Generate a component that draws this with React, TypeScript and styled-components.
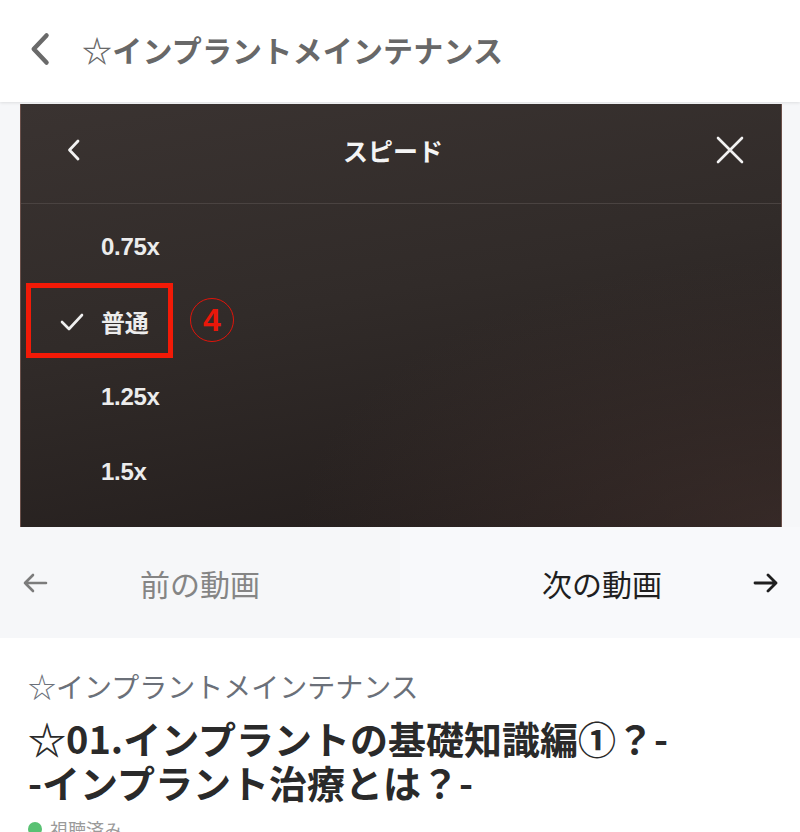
import React, { useState } from 'react';
import styled, { createGlobalStyle } from 'styled-components';

const GlobalStyle = createGlobalStyle`
  html, body {
    margin: 0;
    padding: 0;
    background: #ffffff;
  }
  body {
    font-family: "Noto Sans CJK JP", "Noto Sans", "Liberation Sans", sans-serif;
    overflow: hidden;
  }
`;

const Page = styled.div`
  width: 800px;
  height: 832px;
  display: flex;
  flex-direction: column;
  overflow: hidden;
  & > * {
    flex-shrink: 0;
  }
`;

const Header = styled.header`
  height: 102px;
  display: flex;
  align-items: center;
  gap: 22px;
  padding: 0 0 4px 24px;
  box-sizing: border-box;
  background: #ffffff;
  box-shadow: 0 1px 3px rgba(0, 0, 0, 0.1);
  position: relative;
  z-index: 1;
`;

const HeaderTitle = styled.h1`
  margin: 0;
  font-size: 30px;
  font-weight: 700;
  color: #686868;
  letter-spacing: 0.2px;
`;

const Stage = styled.div`
  background: #f6f7f9;
  padding: 2px 18px 0 20px;
`;

const Player = styled.div`
  height: 423px;
  display: flex;
  flex-direction: column;
  border-left: 1px solid #6b504a;
  border-right: 1px solid #6b504a;
  background:
    radial-gradient(ellipse at 100% 100%, rgba(70, 52, 48, 0.55) 0%, rgba(0, 0, 0, 0) 45%),
    linear-gradient(170deg, #3a3331 0%, #312b29 45%, #221c1b 100%);
  position: relative;
`;

const PanelHead = styled.div`
  height: 100px;
  box-sizing: border-box;
  padding-bottom: 8px;
  display: grid;
  grid-template-columns: 100px 1fr 100px;
  align-items: center;
  border-bottom: 1px solid #4a4341;
`;

const PanelTitle = styled.div`
  text-align: center;
  font-size: 25px;
  font-weight: 700;
  color: #f4f4f4;
  padding-right: 16px;
`;

const IconCell = styled.div<{ $align: 'start' | 'end' }>`
  display: flex;
  justify-content: ${(p) => (p.$align === 'start' ? 'flex-start' : 'flex-end')};
  padding: ${(p) => (p.$align === 'start' ? '0 0 0 42px' : '0 36px 0 0')};
`;

const SpeedList = styled.ul`
  list-style: none;
  margin: 0;
  padding: 5px 0 0;
`;

const SpeedRow = styled.li`
  height: 75px;
  display: flex;
  align-items: center;
  position: relative;
`;

const CheckSlot = styled.span`
  width: 80px;
  display: flex;
  justify-content: flex-end;
  padding-right: 17px;
  box-sizing: border-box;
`;

const SpeedLabel = styled.span`
  font-family: "Liberation Sans", "Noto Sans CJK JP", sans-serif;
  font-size: 24px;
  font-weight: 700;
  color: #ececec;
  letter-spacing: -0.3px;
`;

const HighlightBox = styled.span`
  position: absolute;
  left: 5px;
  top: -1px;
  width: 147px;
  height: 75px;
  box-sizing: border-box;
  border: 5px solid #f21a07;
`;

const StepBadge = styled.span`
  position: absolute;
  left: 169px;
  top: 14px;
  width: 44px;
  height: 44px;
  box-sizing: border-box;
  border: 1px solid #e0140a;
  border-radius: 50%;
  display: flex;
  align-items: center;
  justify-content: center;
  font-family: "Liberation Sans", sans-serif;
  font-size: 32px;
  font-weight: 700;
  color: #e8170a;
  line-height: 1;
`;

const VideoNav = styled.nav`
  height: 111px;
  display: grid;
  grid-template-columns: 1fr 1fr;
  background: #f6f7f9;
`;

const NavButton = styled.button<{ $active: boolean; $side: 'prev' | 'next' }>`
  border: none;
  margin: 0;
  background: ${(p) => (p.$side === 'next' ? '#f8f9fb' : '#f6f7f9')};
  display: flex;
  align-items: center;
  justify-content: ${(p) => (p.$side === 'prev' ? 'flex-start' : 'space-between')};
  padding: ${(p) => (p.$side === 'prev' ? '0 0 0 22px' : '0 21px 0 142px')};
  gap: ${(p) => (p.$side === 'prev' ? '92px' : '0')};
  white-space: nowrap;
  font-family: "Noto Sans CJK JP", sans-serif;
  font-size: 30px;
  font-weight: 400;
  color: ${(p) => (p.$active ? '#1f1f1f' : '#858585')};
  cursor: pointer;
`;

const Info = styled.section`
  padding: 28px 28px 0;
  background: #ffffff;
`;

const Category = styled.div`
  font-size: 28px;
  color: #6b7079;
  line-height: 40px;
`;

const Title = styled.h2`
  margin: 10px 0 0;
  font-size: 38px;
  font-weight: 700;
  color: #2a2a2a;
  line-height: 44px;
  letter-spacing: 0px;
`;

const Meta = styled.div`
  margin-top: 12px;
  display: flex;
  align-items: center;
  gap: 8px;
  font-size: 18px;
  color: #9a9a9a;
`;

const Dot = styled.span`
  width: 14px;
  height: 14px;
  border-radius: 50%;
  background: #59c173;
`;

const ChevronLeft = ({ size, color, width }: { size: number; color: string; width: number }) => (
  <svg width={size} height={size} viewBox="0 0 24 24" fill="none">
    <path d="M15 3 L6.5 12 L15 21" stroke={color} strokeWidth={width} strokeLinecap="round" strokeLinejoin="round" />
  </svg>
);

const CloseIcon = () => (
  <svg width="30" height="30" viewBox="0 0 30 30" fill="none">
    <path d="M3 3 L27 27 M27 3 L3 27" stroke="#f2f2f2" strokeWidth="2.6" strokeLinecap="round" />
  </svg>
);

const CheckIcon = () => (
  <svg width="24" height="18" viewBox="0 0 24 18" fill="none">
    <path d="M2 9 L9 16 L22 2" stroke="#efefef" strokeWidth="2.6" strokeLinecap="round" strokeLinejoin="round" />
  </svg>
);

const Arrow = ({ dir, color }: { dir: 'left' | 'right'; color: string }) => (
  <svg width="26" height="24" viewBox="0 0 26 24" fill="none">
    {dir === 'left' ? (
      <path d="M24 12 H3 M11 4 L3 12 L11 20" stroke={color} strokeWidth="2.6" strokeLinecap="round" strokeLinejoin="round" />
    ) : (
      <path d="M2 12 H23 M15 4 L23 12 L15 20" stroke={color} strokeWidth="2.8" strokeLinecap="round" strokeLinejoin="round" />
    )}
  </svg>
);

const speeds = ['0.75x', '普通', '1.25x', '1.5x'];

const App = () => {
  const [speed, setSpeed] = useState('普通');

  return (
    <Page>
      <GlobalStyle />
      <Header>
        <ChevronLeft size={36} color="#6a6a6a" width={3} />
        <HeaderTitle>☆インプラントメインテナンス</HeaderTitle>
      </Header>

      <Stage>
        <Player>
          <PanelHead>
            <IconCell $align="start">
              <ChevronLeft size={24} color="#f2f2f2" width={2.8} />
            </IconCell>
            <PanelTitle>スピード</PanelTitle>
            <IconCell $align="end">
              <CloseIcon />
            </IconCell>
          </PanelHead>
          <SpeedList>
            {speeds.map((s) => (
              <SpeedRow key={s} onClick={() => setSpeed(s)}>
                <CheckSlot>{speed === s && <CheckIcon />}</CheckSlot>
                <SpeedLabel>{s}</SpeedLabel>
                {s === '普通' && (
                  <>
                    <HighlightBox />
                    <StepBadge>4</StepBadge>
                  </>
                )}
              </SpeedRow>
            ))}
          </SpeedList>
        </Player>
      </Stage>

      <VideoNav>
        <NavButton $side="prev" $active={false}>
          <Arrow dir="left" color="#7c7c7c" />
          前の動画
        </NavButton>
        <NavButton $side="next" $active>
          次の動画
          <Arrow dir="right" color="#1f1f1f" />
        </NavButton>
      </VideoNav>

      <Info>
        <Category>☆インプラントメインテナンス</Category>
        <Title>
          ☆01.インプラントの基礎知識編①？-
          <br />
          -インプラント治療とは？-
        </Title>
        <Meta>
          <Dot />
          視聴済み
        </Meta>
      </Info>
    </Page>
  );
};

export default App;
